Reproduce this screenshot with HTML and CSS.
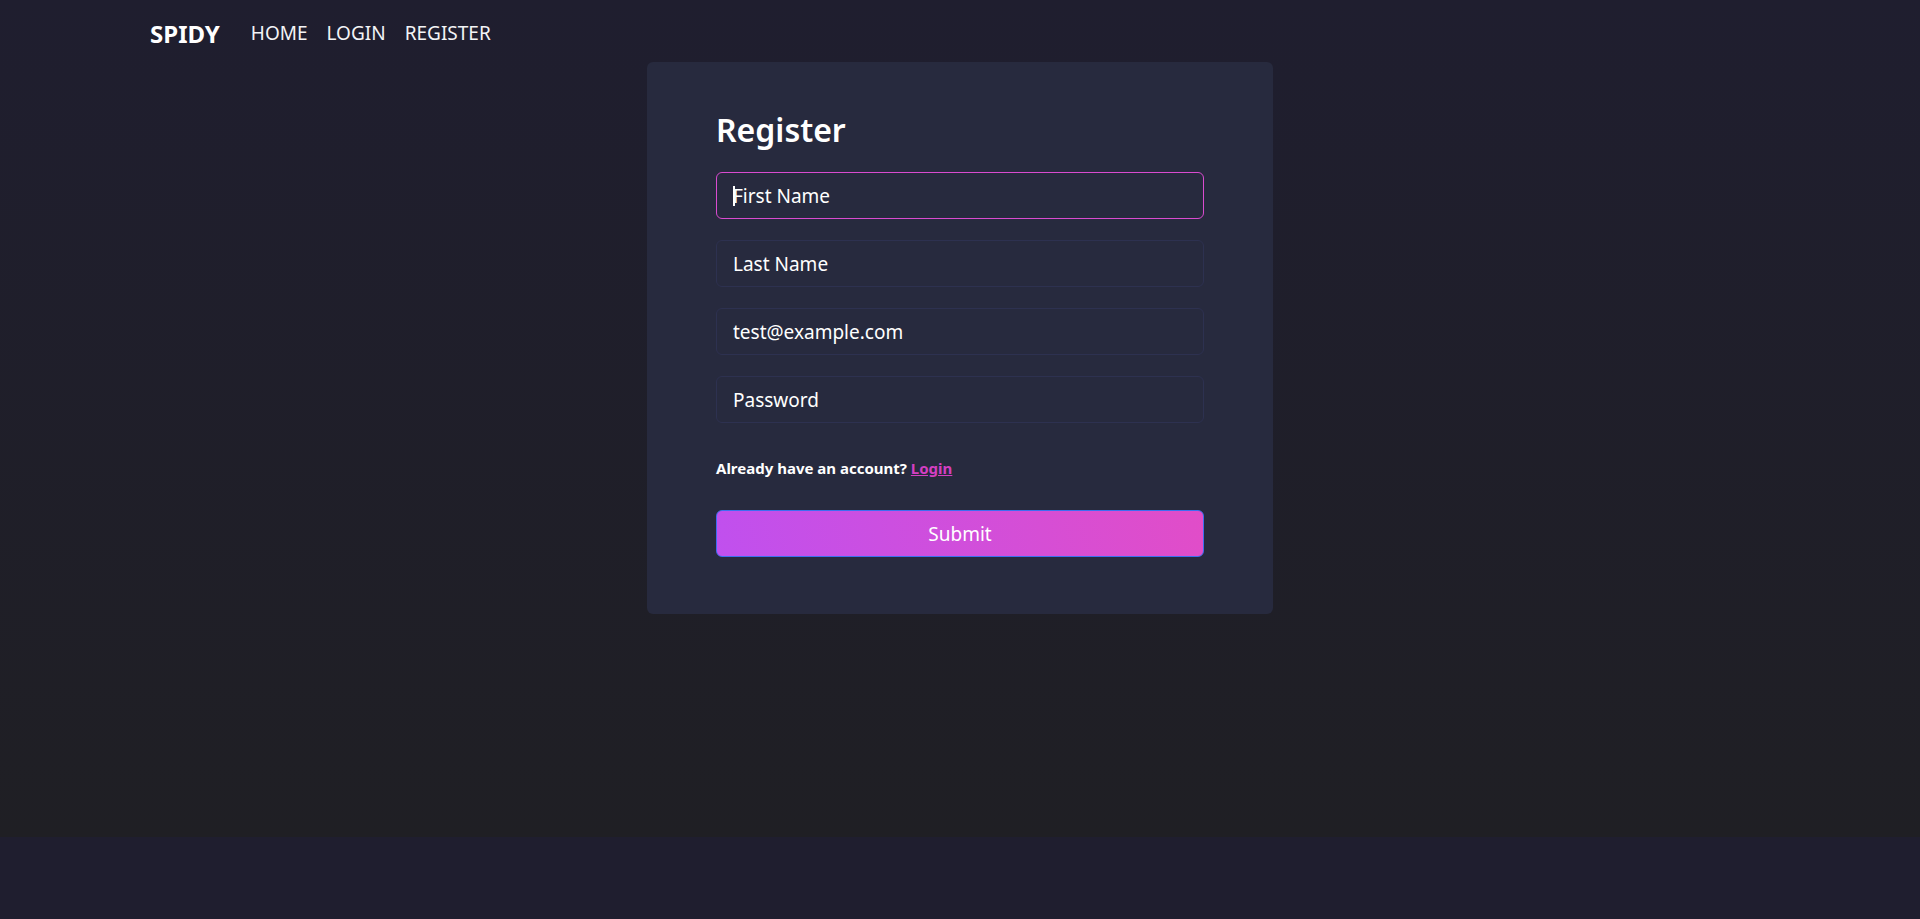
FILE: index.html
```html
<!DOCTYPE html>
<html lang="en">
<head>
<meta charset="utf-8">
<title>Register</title>
<link rel="stylesheet" href="styles.css">
</head>
<body>
<div class="page">
  <header class="nav">
    <div class="nav-inner">
      <a class="brand" href="#">SPIDY</a>
      <nav class="links">
        <a href="#">HOME</a>
        <a href="#">LOGIN</a>
        <a href="#">REGISTER</a>
      </nav>
    </div>
  </header>
  <main class="main">
    <form class="card">
      <h1 class="title">Register</h1>
      <div class="field focused">
        <span class="caret"></span>
        <input class="input" type="text" placeholder="First Name">
      </div>
      <div class="field">
        <input class="input" type="text" placeholder="Last Name">
      </div>
      <div class="field">
        <input class="input" type="email" value="test@example.com">
      </div>
      <div class="field">
        <input class="input" type="password" placeholder="Password">
      </div>
      <p class="note">Already have an account? <a href="#">Login</a></p>
      <button class="submit" type="button">Submit</button>
    </form>
  </main>
</div>
<footer class="footer"></footer>
</body>
</html>
```
FILE: styles.css
```css
* { box-sizing: border-box; }
html, body { margin: 0; padding: 0; }
body {
  font-family: "Noto Sans", "Open Sans", sans-serif;
  color: #ffffff;
  background: #1f1e2f;
}
.page {
  min-height: 837px;
  background: linear-gradient(to bottom, #1f1e2f 0%, #1f1f24 100%);
  display: flex;
  flex-direction: column;
}
.nav { height: 62px; }
.nav-inner {
  width: 1620px;
  margin: 0 auto;
  height: 100%;
  display: flex;
  align-items: center;
  padding-top: 4px;
}
.brand {
  color: #fff;
  text-decoration: none;
  font-size: 24px;
  font-weight: 700;
  margin-right: 31px;
}
.links { display: flex; gap: 19px; }
.links a {
  color: #f3f4f6;
  text-decoration: none;
  font-size: 19px;
}
.main {
  flex: 1;
  display: flex;
  justify-content: center;
  align-items: flex-start;
}
.card {
  width: 626px;
  background: #272a3e;
  border-radius: 6px;
  padding: 48px 69px 57px;
  display: flex;
  flex-direction: column;
}
.title {
  margin: 0 0 22px;
  font-size: 32px;
  line-height: 40px;
  font-weight: 600;
}
.field {
  position: relative;
  margin-bottom: 21px;
}
.field:last-of-type { margin-bottom: 0; }
.input {
  display: block;
  width: 100%;
  height: 47px;
  padding: 0 16px;
  background: #272a3e;
  border: 1px solid #2d3150;
  border-radius: 6px;
  color: #ffffff;
  font-family: inherit;
  font-size: 19px;
  outline: none;
}
.input::placeholder { color: #ffffff; opacity: 1; }
.focused .input { border-color: #d94bd0; }
.caret {
  position: absolute;
  left: 17px;
  top: 14px;
  width: 2px;
  height: 20px;
  background: #ffffff;
}
.note {
  margin: 35px 0 0;
  font-size: 15px;
  line-height: 20px;
  font-weight: 700;
}
.note a {
  color: #d43fc2;
  text-decoration: underline;
}
.submit {
  margin-top: 32px;
  height: 47px;
  width: 100%;
  border: 1px solid #3d6ef0;
  border-radius: 6px;
  background: linear-gradient(75deg, #c050ee 0%, #e14dc8 100%);
  color: #ffffff;
  font-family: inherit;
  font-size: 19px;
  cursor: pointer;
}
.footer {
  height: 82px;
  background: #1f1e2f;
}
```
